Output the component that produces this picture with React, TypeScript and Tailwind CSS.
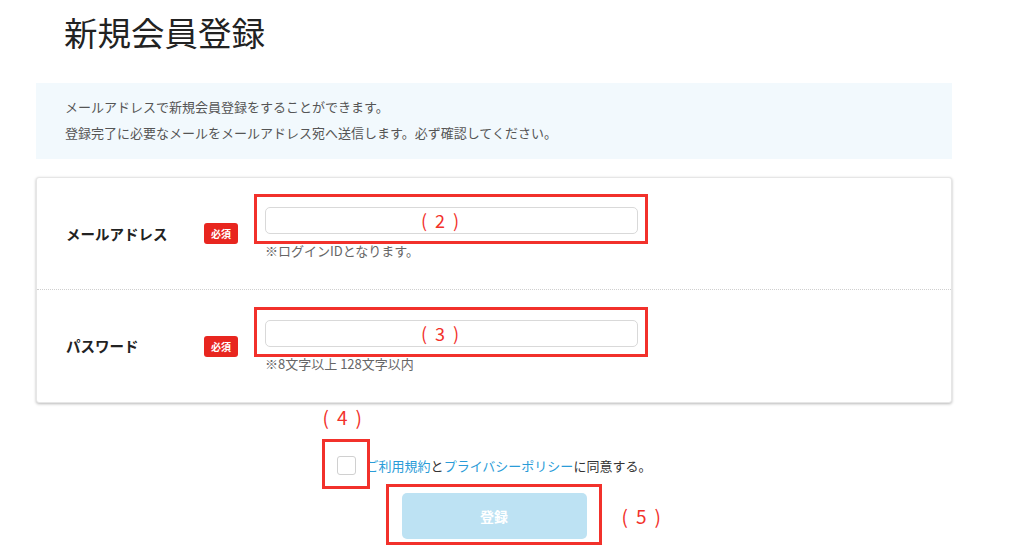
import React from "react";

const font = { fontFamily: '"Noto Sans CJK JP", "Noto Sans", sans-serif' };

function Annot({ n, className }: { n: string; className: string }) {
  return (
    <span className={`absolute flex items-center text-[18px] leading-none text-[#f2312b] whitespace-nowrap ${className}`}>
      <span>(</span>
      <span className="mx-[8px]">{n}</span>
      <span>)</span>
    </span>
  );
}

function Field({
  label,
  hint,
  n,
  last,
}: {
  label: string;
  hint: string;
  n: string;
  last?: boolean;
}) {
  return (
    <div
      className={`flex items-center h-[112px] pl-[29px] ${
        last ? "" : "border-b border-dotted border-[#cfcfcf]"
      }`}
    >
      <div className="w-[138px] text-[14.5px] font-bold text-[#222]">{label}</div>
      <span className="flex items-center justify-center w-[34px] h-[21px] rounded-[3px] bg-[#e8261f] text-white text-[10px] font-bold">
        必須
      </span>
      <div className="ml-[27px] flex flex-col">
        <div className="relative w-[373px] h-[27px]">
          <input className="w-full h-full rounded-[5px] border border-[#d9d9d9] bg-white outline-none" />
          <div className="absolute -left-[11px] -top-[13px] -right-[10px] -bottom-[10px] border-[3px] border-[#f2312b] pointer-events-none" />
          <Annot n={n} className="left-[156px] top-[4px]" />
        </div>
        <p className="mt-[8px] text-[13px] leading-[18px] text-[#666]">{hint}</p>
      </div>
    </div>
  );
}

export default function App() {
  return (
    <div className="min-h-screen bg-white" style={font}>
      <div className="w-[916px] ml-[36px]">
        <h1 className="pt-[11px] pl-[28px] text-[33.5px] leading-[42px] font-normal text-[#222]">
          新規会員登録
        </h1>

        <div className="mt-[30px] h-[76px] bg-[#f2f9fd] pl-[29px] pt-[11px] text-[13px] leading-[26px] text-[#555]">
          <p>メールアドレスで新規会員登録をすることができます。</p>
          <p>登録完了に必要なメールをメールアドレス宛へ送信します。必ず確認してください。</p>
        </div>

        <div className="mt-[18px] rounded-[3px] border border-[#e6e6e6] bg-white shadow-[0_1px_3px_rgba(0,0,0,0.28)]">
          <Field label="メールアドレス" hint="※ログインIDとなります。" n="2" />
          <Field label="パスワード" hint="※8文字以上 128文字以内" n="3" last />
        </div>

        <div className="mt-[53px] flex items-center justify-center">
          <div className="relative flex items-center">
            <span className="block w-[19px] h-[19px] rounded-[3px] border border-[#d0d0d0] bg-white" />
            <div className="absolute -left-[15px] -top-[17px] w-[48px] h-[50px] border-[3px] border-[#f2312b]" />
            <Annot n="4" className="-left-[14px] -top-[49px] text-[19px]" />
            <p className="ml-[10px] text-[13px] leading-[19px] text-[#333]">
              <span className="text-[#2a9cd8]">ご利用規約</span>と
              <span className="text-[#2a9cd8]">プライバシーポリシー</span>に同意する。
            </p>
          </div>
        </div>

        <div className="mt-[18px] flex justify-center">
          <div className="relative">
            <button className="w-[185px] h-[46px] rounded-[5px] bg-[#bde2f3] text-white text-[14px] font-bold">
              登録
            </button>
            <div className="absolute -left-[16px] -top-[9px] -right-[15px] -bottom-[6px] border-[3px] border-[#f2312b]" />
            <Annot n="5" className="left-[220px] top-[13px] text-[19px]" />
          </div>
        </div>
      </div>
    </div>
  );
}
